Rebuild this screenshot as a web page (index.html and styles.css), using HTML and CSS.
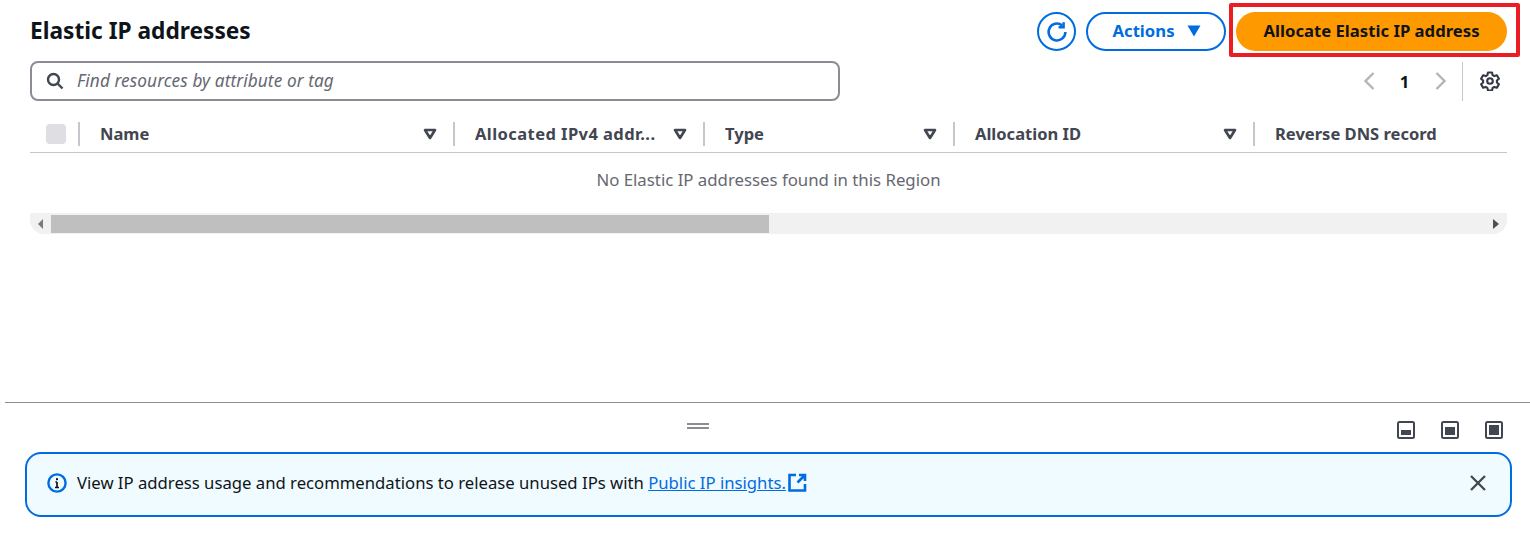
FILE: index.html
```html
<!DOCTYPE html>
<html lang="en">
<head>
<meta charset="utf-8">
<title>Elastic IP addresses</title>
<link rel="stylesheet" href="styles.css">
</head>
<body>
<main class="panel">
  <header class="top-row">
    <h1 class="title">Elastic IP addresses</h1>
    <div class="actions">
      <button class="btn-icon" aria-label="Refresh">
        <svg width="22" height="22" viewBox="0 0 22 22" fill="none" stroke="#006ce0" stroke-width="2.5"><path d="M19.4 11a8.4 8.4 0 1 1-3.2-6.6"/><path d="M17.6 1.2v5h-5" stroke-linejoin="miter"/></svg>
      </button>
      <button class="btn-normal"><span>Actions</span>
        <svg width="14" height="12" viewBox="0 0 14 12"><path d="M0.5 0.5h13L7 11.5z" fill="#006ce0"/></svg>
      </button>
      <div class="primary-wrap">
        <button class="btn-primary"><span>Allocate Elastic IP address</span></button>
        <span class="highlight"></span>
      </div>
    </div>
  </header>

  <div class="filter-row">
    <div class="search">
      <svg width="18" height="18" viewBox="0 0 18 18" fill="none" stroke="#424650" stroke-width="2.4"><circle cx="7.5" cy="7.5" r="5.5"/><path d="M11.5 11.5l5 5"/></svg>
      <span class="placeholder">Find resources by attribute or tag</span>
    </div>
    <div class="tools">
      <svg class="chev" width="12" height="20" viewBox="0 0 12 20" fill="none" stroke="#b4b4bb" stroke-width="2.4"><path d="M10.5 2L2.5 10l8 8"/></svg>
      <span class="page">1</span>
      <svg class="chev" width="12" height="20" viewBox="0 0 12 20" fill="none" stroke="#b4b4bb" stroke-width="2.4"><path d="M1.5 2l8 8-8 8"/></svg>
      <span class="tool-div"></span>
      <svg class="gear" width="20" height="20" viewBox="0 0 20 20" fill="none" stroke="#333843" stroke-width="2.1" stroke-linejoin="round"><path d="M8 1.5h4l.6 2.6 1.7 1 2.6-.8 2 3.4-2 1.8v2l2 1.8-2 3.4-2.6-.8-1.7 1-.6 2.6H8l-.6-2.6-1.7-1-2.6.8-2-3.4 2-1.8v-2l-2-1.8 2-3.4 2.6.8 1.7-1z"/><circle cx="10" cy="10" r="2.8"/></svg>
    </div>
  </div>

  <div class="table-head">
    <div class="cell-check"><span class="checkbox"></span></div>
    <div class="col col-name"><span class="col-label">Name</span><svg class="sort" width="14" height="12" viewBox="0 0 14 12"><path d="M2 2h10l-5 8z" fill="none" stroke="#424650" stroke-width="2.6" stroke-linejoin="round"/></svg></div>
    <div class="col col-clipped"><span class="col-label">Allocated IPv4 addr...</span><svg class="sort" width="14" height="12" viewBox="0 0 14 12"><path d="M2 2h10l-5 8z" fill="none" stroke="#424650" stroke-width="2.6" stroke-linejoin="round"/></svg></div>
    <div class="col"><span class="col-label">Type</span><svg class="sort" width="14" height="12" viewBox="0 0 14 12"><path d="M2 2h10l-5 8z" fill="none" stroke="#424650" stroke-width="2.6" stroke-linejoin="round"/></svg></div>
    <div class="col col-wide"><span class="col-label">Allocation ID</span><svg class="sort" width="14" height="12" viewBox="0 0 14 12"><path d="M2 2h10l-5 8z" fill="none" stroke="#424650" stroke-width="2.6" stroke-linejoin="round"/></svg></div>
    <div class="col col-last"><span class="col-label">Reverse DNS record</span></div>
  </div>
  <p class="empty">No Elastic IP addresses found in this Region</p>
  <div class="scrollbar">
    <svg class="scroll-arrow" width="6" height="10" viewBox="0 0 6 10"><path d="M5 0v10L0 5z" fill="#7a7a7a"/></svg>
    <div class="scroll-track"><div class="scroll-thumb"></div></div>
    <svg class="scroll-arrow" width="6" height="10" viewBox="0 0 6 10"><path d="M0 0v10l6-5z" fill="#505050"/></svg>
  </div>
</main>

<section class="split">
  <div class="split-bar">
    <span class="handle"></span>
    <div class="split-icons">
      <svg width="18" height="18" viewBox="0 0 18 18"><rect x="1" y="1" width="16" height="16" rx="1.5" fill="none" stroke="#424650" stroke-width="2"/><rect x="4" y="9" width="10" height="5" fill="#424650"/></svg>
      <svg width="18" height="18" viewBox="0 0 18 18"><rect x="1" y="1" width="16" height="16" rx="1.5" fill="none" stroke="#424650" stroke-width="2"/><rect x="4" y="6" width="10" height="8" fill="#424650"/></svg>
      <svg width="18" height="18" viewBox="0 0 18 18"><rect x="1" y="1" width="16" height="16" rx="1.5" fill="none" stroke="#424650" stroke-width="2"/><rect x="4" y="4" width="10" height="10" fill="#424650"/></svg>
    </div>
  </div>
  <div class="banner">
    <svg class="info" width="20" height="20" viewBox="0 0 20 20" fill="none"><circle cx="10" cy="10" r="8.6" stroke="#006ce0" stroke-width="2.4"/><path d="M10 9v5.5M8 14.5h4M8.4 9H10" stroke="#0f141a" stroke-width="1.7"/><rect x="9" y="5.2" width="2" height="2" fill="#0f141a"/></svg>
    <span class="banner-text">View IP address usage and recommendations to release unused IPs with <a class="link" href="#">Public IP insights.</a></span>
    <svg class="ext" width="19" height="19" viewBox="0 0 19 19" fill="none" stroke="#006ce0" stroke-width="2.6"><path d="M8 2H1.5v15.5H17V11"/><path d="M11 2h6v6M17 2l-7.5 7.5"/></svg>
    <svg class="close" width="18" height="18" viewBox="0 0 18 18" fill="none" stroke="#424650" stroke-width="2.3"><path d="M2 2l14 14M16 2L2 16"/></svg>
  </div>
</section>
</body>
</html>
```
FILE: styles.css
```css
* { box-sizing: border-box; }
html, body { margin: 0; padding: 0; background: #fff; }
body {
  width: 1530px;
  height: 537px;
  overflow: hidden;
  font-family: "Noto Sans", "Open Sans", sans-serif;
  color: #0f141a;
  font-size: 16.7px;
}
button { font-family: inherit; cursor: pointer; }

.panel { height: 402px; padding: 12px 23px 0 30px; }

.top-row { display: flex; justify-content: space-between; align-items: center; height: 39px; }
.title { margin: 0 0 2px; font-size: 22.7px; font-weight: 700; line-height: 37px; }
.actions { display: flex; gap: 10px; align-items: center; }
.btn-icon {
  width: 39px; height: 39px; padding: 0; border-radius: 50%;
  border: 2px solid #006ce0; background: #fff;
  display: flex; align-items: center; justify-content: center;
}
.btn-normal {
  width: 140px; height: 39px; border-radius: 20px; border: 2px solid #006ce0; background: #fff;
  color: #006ce0; font-weight: 700; font-size: 16.7px; padding: 0 0 2px 1px;
  display: flex; align-items: center; justify-content: center; gap: 12px;
}
.btn-primary {
  display: block; width: 271px; height: 39px; border-radius: 20px; border: 0; background: #ff9900;
  color: #0f141a; font-weight: 700; font-size: 16.7px; padding: 0 0 2px;
}
.primary-wrap { position: relative; }
.highlight {
  position: absolute; left: -7px; top: -9px; width: 291px; height: 54px;
  border: 4px solid #ec1c24; border-radius: 2px; pointer-events: none;
}

.filter-row { display: flex; justify-content: space-between; align-items: center; height: 40px; margin-top: 10px; }
.search {
  width: 810px; height: 40px; border: 2px solid #8c8c94; border-radius: 8px;
  display: flex; align-items: center; gap: 13px; padding-left: 14px;
}
.placeholder { font-style: italic; color: #656871; font-size: 17.2px; letter-spacing: .1px; margin-bottom: 2px; }
.tools { display: flex; align-items: center; height: 40px; }
.page { width: 60px; padding-right: 1px; text-align: center; font-weight: 700; font-size: 16.7px; color: #0f141a; }
.tool-div { width: 1px; height: 39px; background: #c6c6cd; margin-left: 15px; }
.gear { margin: 0 7px 0 17px; }

.table-head { display: flex; height: 38px; margin-top: 14px; border-bottom: 1px solid #c6c6cd; align-items: center; }
.cell-check { width: 48px; height: 24px; padding-left: 16px; display: flex; align-items: center; }
.checkbox { width: 20px; height: 20px; border-radius: 4px; background: #dedee3; }
.col {
  width: 250px; height: 24px; display: flex; align-items: center; justify-content: space-between;
  padding: 0 16px 0 20px; border-left: 2px solid #c6c6cd;
  font-weight: 700; font-size: 16.55px; color: #424650;
}
.col-name { width: 375px; }
.col-wide { width: 300px; }
.col-label { white-space: nowrap; }
.col-clipped .col-label { letter-spacing: .42px; }
.col-last { flex: 1; width: auto; }
.sort { flex: none; }

.empty { margin: 0; height: 60px; padding-top: 14px; text-align: center; color: #656871; font-size: 16.8px; line-height: 26px; }
.scrollbar { display: flex; align-items: center; height: 21px; background: #f1f1f1; border-radius: 0 0 14px 14px; padding: 0 8px; gap: 7px; }
.scroll-track { flex: 1; height: 18px; }
.scroll-thumb { width: 718px; height: 18px; background: #bfbfbf; }
.scroll-arrow { flex: none; }

.split { height: 135px; margin-left: 5px; border-top: 1px solid #8c8c94; }
.split-bar { display: flex; height: 49px; position: relative; }
.handle { position: absolute; left: 682px; top: 20px; width: 22px; height: 6px; border-top: 2px solid #8c8c94; border-bottom: 2px solid #8c8c94; }
.split-icons { margin-left: auto; margin-right: 27px; display: flex; gap: 26px; padding-top: 18px; }
.banner {
  margin: 0 18px 0 20px; height: 65px; border: 2px solid #006ce0; border-radius: 16px; background: #f0fbff;
  display: flex; align-items: center; padding: 0 24px 4px 20px;
}
.info { flex: none; }
.banner-text { margin-left: 10px; white-space: nowrap; }
.link { color: #006ce0; text-decoration: underline; }
.ext { margin-left: 2px; }
.close { margin-left: auto; margin-right: -1px; }
```
